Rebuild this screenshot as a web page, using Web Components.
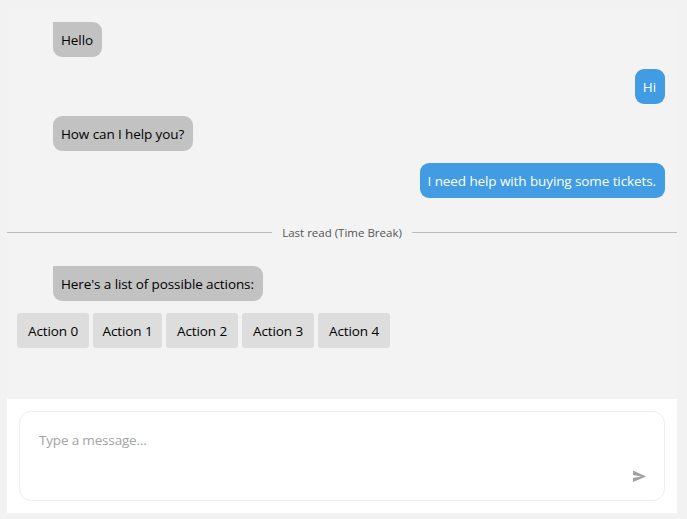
<!DOCTYPE html>
<html>
<head>
<meta charset="utf-8">
<title>Chat</title>
<style>
  html, body { margin: 0; height: 100%; }
  body { background: #f2f2f2; font: 13.5px/19px "Open Sans", "Noto Sans", sans-serif; letter-spacing: -0.1px; }
</style>
</head>
<body>
<chat-page>
  <chat-bubble from="bot" square>Hello</chat-bubble>
  <chat-bubble from="me">Hi</chat-bubble>
  <chat-bubble from="bot">How can I help you?</chat-bubble>
  <chat-bubble from="me">I need help with buying some tickets.</chat-bubble>
  <chat-divider>Last read (Time Break)</chat-divider>
  <chat-bubble from="bot" square>Here's a list of possible actions:</chat-bubble>
  <chat-actions>
    <chat-action>Action 0</chat-action>
    <chat-action narrow>Action 1</chat-action>
    <chat-action>Action 2</chat-action>
    <chat-action>Action 3</chat-action>
    <chat-action>Action 4</chat-action>
  </chat-actions>
</chat-page>

<script>
  // Small helper so every element is declared the same way
  function registerElement(tagName, markup) {
    customElements.define(tagName, class extends HTMLElement {
      constructor() {
        super();
        this.attachShadow({ mode: 'open' }).innerHTML = markup;
      }
    });
  }

  registerElement('chat-page', `
    <style>
      :host { display: flex; flex-direction: column; box-sizing: border-box; height: 519px; padding: 7px 10px 6px 7px; }
      .log { flex: 1; display: flex; flex-direction: column; padding-top: 15px; background: #f3f3f3; }
      .input { height: 114px; box-sizing: border-box; padding: 12px; background: #fff; }
      .box { display: flex; flex-direction: column; height: 100%; box-sizing: border-box; padding: 19px 18px 17px 19px; border: 1px solid #eeeeee; border-radius: 12px; color: #a3a3a3; }
      .hint { flex: 1; letter-spacing: -0.17px; }
      svg { display: block; align-self: flex-end; }
    </style>
    <div class="log"><slot></slot></div>
    <div class="input">
      <div class="box">
        <div class="hint">Type a message...</div>
        <svg width="13" height="13" viewBox="0 0 13 13"><path fill="#a0a0a0" d="M0 12l13-5.500L0 .5v4.500l8.500 1.500L0 8z"/></svg>
      </div>
    </div>
  `);

  registerElement('chat-bubble', `
    <style>
      :host { display: flex; margin: 0 12px 12px 46px; }
      :host([from="me"]) { justify-content: flex-end; }
      div { box-sizing: border-box; height: 35px; padding: 9px 9px 7px 8px; border-radius: 9px; color: #000; background: #c2c2c2; white-space: nowrap; }
      :host([from="me"]) div { color: #fff; background: #419ce4; }
      :host([square]) div { border-top-left-radius: 0; }
    </style>
    <div><slot></slot></div>
  `);

  registerElement('chat-divider', `
    <style>
      :host { display: flex; align-items: center; gap: 10px; height: 20px; margin: 12px 0 24px; font-size: 11.5px; letter-spacing: 0; color: #555; }
      i { flex: 1; height: 1px; background: #bdbdbd; }
    </style>
    <i></i><span><slot></slot></span><i></i>
  `);

  registerElement('chat-actions', `
    <style>
      :host { display: flex; gap: 4px; padding-left: 10px; }
    </style>
    <slot></slot>
  `);

  registerElement('chat-action', `
    <style>
      :host { display: block; box-sizing: border-box; width: 72px; height: 35px; padding: 9px 0 7px; border-radius: 3px; background: #dddddd; color: #000; text-align: center; white-space: nowrap; }
      :host([narrow]) { width: 69px; }
    </style>
    <slot></slot>
  `);
</script>
</body>
</html>
